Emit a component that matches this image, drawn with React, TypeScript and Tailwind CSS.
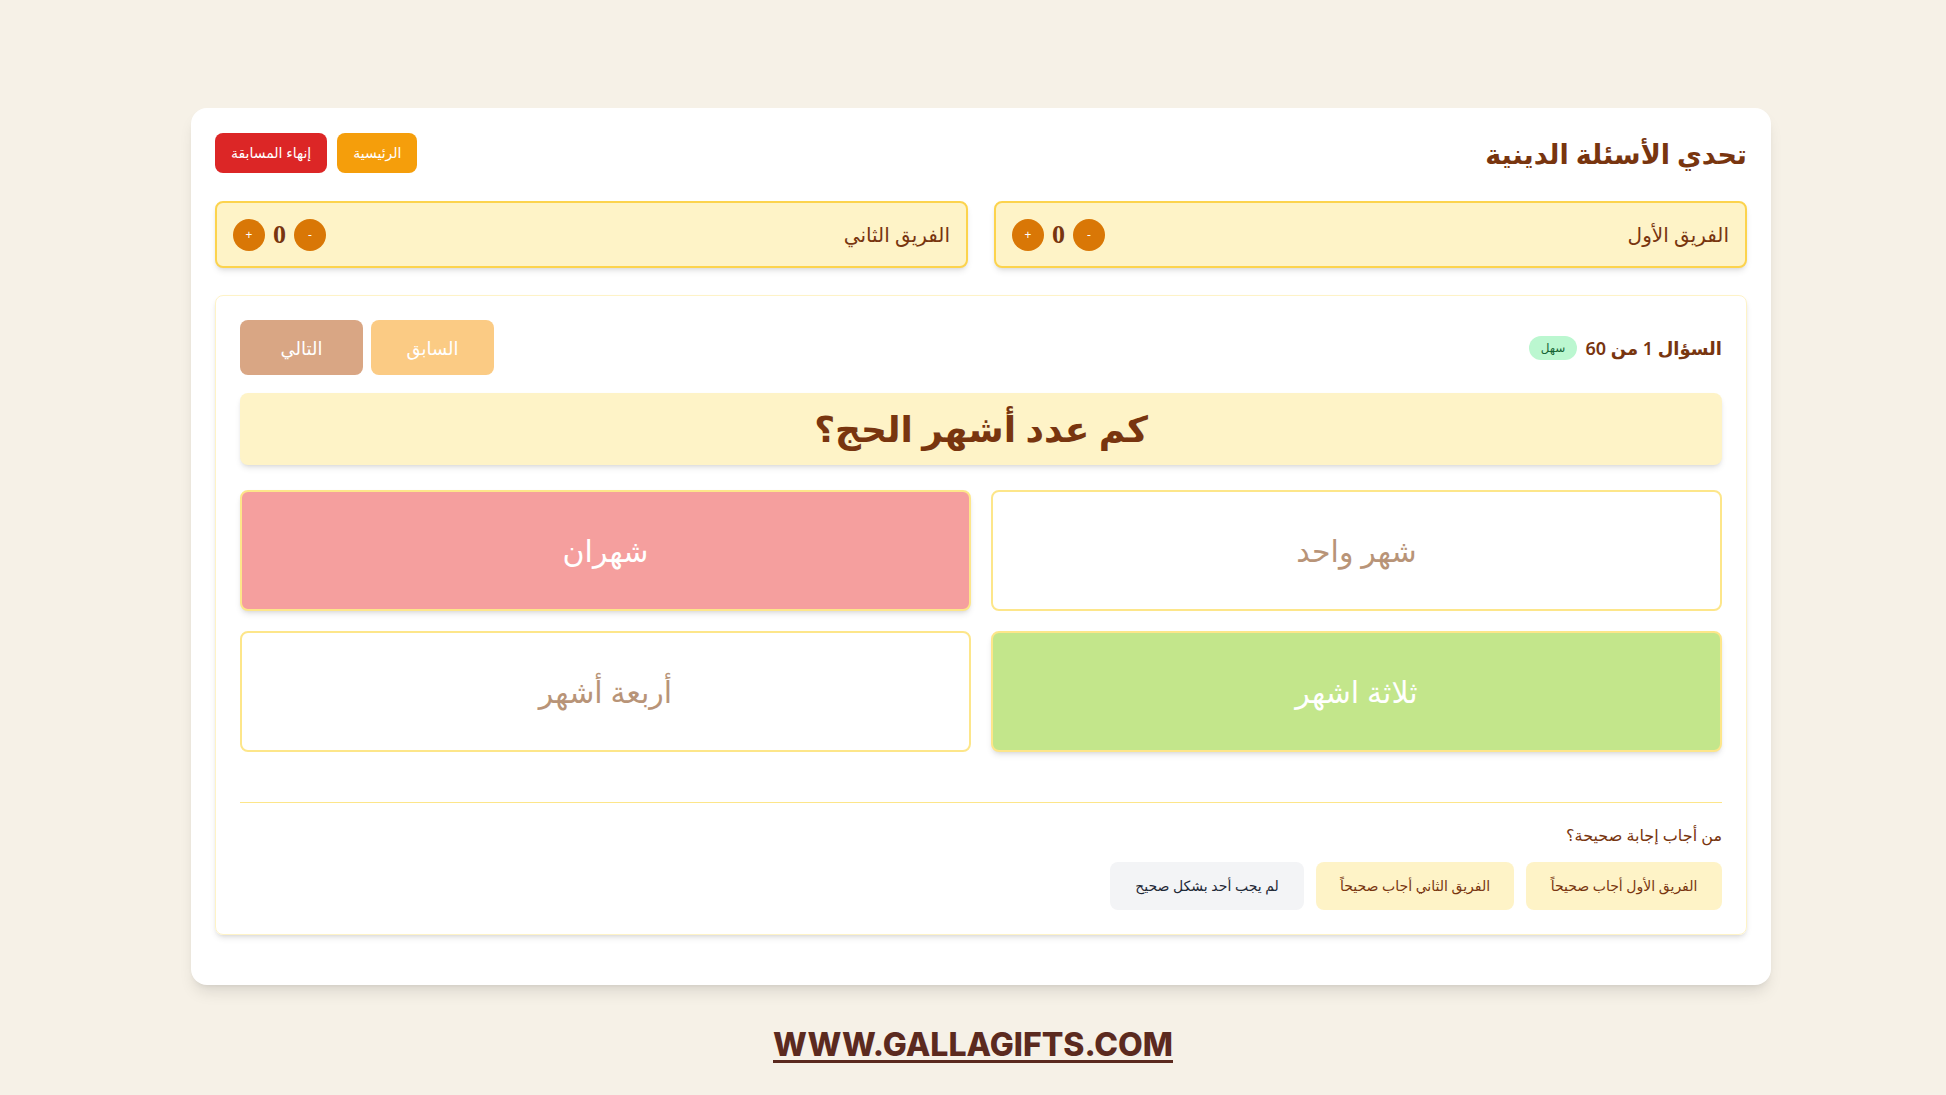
import { useState } from "react";

const font = { fontFamily: '"Noto Sans", "DejaVu Sans", sans-serif' };

interface Answer {
  text: string;
  state: "idle" | "wrong" | "right";
}

const answers: Answer[] = [
  { text: "شهر واحد", state: "idle" },
  { text: "شهران", state: "wrong" },
  { text: "ثلاثة اشهر", state: "right" },
  { text: "أربعة أشهر", state: "idle" },
];

function TeamBox({ name, score, onChange }: { name: string; score: number; onChange: (d: number) => void }) {
  return (
    <div className="flex h-[67px] flex-1 items-center justify-between rounded-lg border-2 border-[#fcd34d] bg-[#fef3c7] px-4 shadow-md">
      <span className="text-xl font-medium text-[#78350f]">{name}</span>
      <div className="flex items-center gap-2">
        <button
          onClick={() => onChange(-1)}
          className="flex h-8 w-8 items-center justify-center rounded-full bg-[#d97706] text-xs text-white"
        >
          -
        </button>
        <span
          style={{ fontFamily: '"Liberation Serif", serif' }}
          className="text-[26px] leading-none font-bold text-[#78350f]"
        >
          {score}
        </span>
        <button
          onClick={() => onChange(1)}
          className="flex h-8 w-8 items-center justify-center rounded-full bg-[#d97706] text-xs text-white"
        >
          +
        </button>
      </div>
    </div>
  );
}

export default function App() {
  const [scores, setScores] = useState([0, 0]);

  const bump = (i: number, d: number) =>
    setScores((s) => s.map((v, j) => (j === i ? Math.max(0, v + d) : v)));

  return (
    <div dir="rtl" style={font} className="min-h-screen bg-[#f6f1e7] pt-[108px]">
      <div className="flex justify-center pl-4">
        <div className="w-[1580px] rounded-2xl bg-white px-6 pt-[25px] pb-[50px] shadow-lg">
          <div className="flex h-10 items-center justify-between">
            <h1 className="text-[27px] leading-none font-semibold text-[#78350f]">تحدي الأسئلة الدينية</h1>
            <div className="flex gap-2.5">
              <button className="h-10 rounded-lg bg-[#f59e0b] px-4 text-sm text-white">الرئيسية</button>
              <button className="h-10 rounded-lg bg-[#dc2626] px-4 text-sm text-white">إنهاء المسابقة</button>
            </div>
          </div>

          <div className="mt-7 flex gap-[26px]">
            <TeamBox name="الفريق الأول" score={scores[0]} onChange={(d) => bump(0, d)} />
            <TeamBox name="الفريق الثاني" score={scores[1]} onChange={(d) => bump(1, d)} />
          </div>

          <div className="mt-[27px] rounded-lg border border-[#fef3c7] p-6 shadow-md">
            <div className="flex items-center justify-between">
              <div className="flex items-center gap-2">
                <span className="text-lg font-semibold text-[#78350f]">السؤال 1 من 60</span>
                <span className="rounded-full bg-[#bbf7d0] px-3 py-1 text-xs text-[#166534]">سهل</span>
              </div>
              <div className="flex gap-2">
                <button className="h-[55px] w-[123px] rounded-lg bg-[#fbcb84] text-lg font-medium text-white">
                  السابق
                </button>
                <button className="h-[55px] w-[123px] rounded-lg bg-[#d9a684] text-lg font-medium text-white">
                  التالي
                </button>
              </div>
            </div>

            <div className="mt-[18px] flex h-[72px] items-center justify-center rounded-lg bg-[#fef3c7] shadow-md">
              <h2 className="text-4xl font-semibold text-[#78350f]">كم عدد أشهر الحج؟</h2>
            </div>

            <div className="mt-[25px] grid grid-cols-2 gap-5">
              {answers.map((a) => (
                <button
                  key={a.text}
                  className={
                    a.state === "wrong"
                      ? "flex h-[121px] items-center justify-center rounded-lg border-2 border-[#fde68a] bg-[#f59f9e] text-3xl text-white shadow-md"
                      : a.state === "right"
                        ? "flex h-[121px] items-center justify-center rounded-lg border-2 border-[#fde68a] bg-[#c3e68b] text-3xl text-white shadow-md"
                        : "flex h-[121px] items-center justify-center rounded-lg border-2 border-[#fde68a] bg-white text-3xl text-[#b89478]"
                  }
                >
                  {a.text}
                </button>
              ))}
            </div>

            <div className="mt-[50px] border-t border-[#fde68a] pt-[20px]">
              <p className="text-base text-[#78350f]">من أجاب إجابة صحيحة؟</p>
              <div className="mt-[15px] flex gap-3">
                <button className="h-12 w-[196px] rounded-lg bg-[#fef3c7] text-sm text-[#78350f]">
                  الفريق الأول أجاب صحيحاً
                </button>
                <button className="h-12 w-[198px] rounded-lg bg-[#fef3c7] text-sm text-[#78350f]">
                  الفريق الثاني أجاب صحيحاً
                </button>
                <button className="h-12 w-[194px] rounded-lg bg-[#f3f4f6] text-sm text-[#1f2937]">
                  لم يجب أحد بشكل صحيح
                </button>
              </div>
            </div>
          </div>
        </div>
      </div>

      <div className="mt-[36px] flex justify-center">
        <a
          href="#"
          dir="ltr"
          style={{ fontFamily: "Inter, sans-serif" }}
          className="text-[32px] font-extrabold text-[#5b2a1f] underline decoration-[3px] underline-offset-4"
        >
          WWW.GALLAGIFTS.COM
        </a>
      </div>
    </div>
  );
}
